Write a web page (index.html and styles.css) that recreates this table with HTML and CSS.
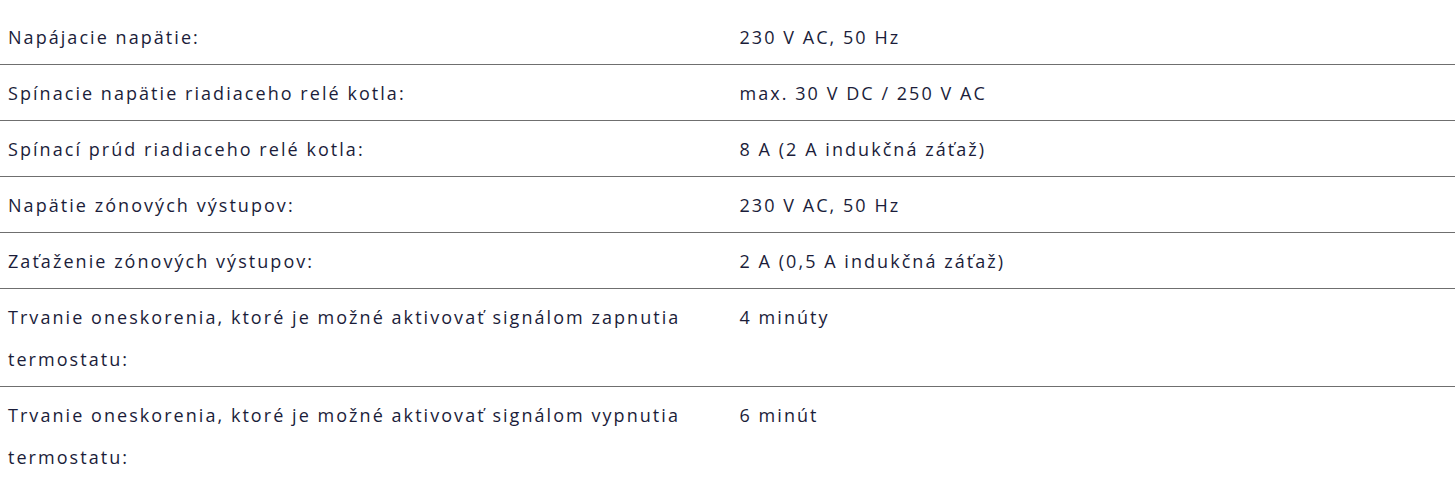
FILE: index.html
```html
<!DOCTYPE html>
<html lang="sk">
<head>
<meta charset="utf-8">
<title>Technické parametre</title>
<link rel="stylesheet" href="styles.css">
</head>
<body>
<table class="spec">
  <tbody>
    <tr><td class="label">Napájacie napätie:</td><td class="value">230 V AC, 50 Hz</td></tr>
    <tr><td class="label">Spínacie napätie riadiaceho relé kotla:</td><td class="value">max. 30 V DC / 250 V AC</td></tr>
    <tr><td class="label">Spínací prúd riadiaceho relé kotla:</td><td class="value">8 A (2 A indukčná záťaž)</td></tr>
    <tr><td class="label">Napätie zónových výstupov:</td><td class="value">230 V AC, 50 Hz</td></tr>
    <tr><td class="label">Zaťaženie zónových výstupov:</td><td class="value">2 A (0,5 A indukčná záťaž)</td></tr>
    <tr><td class="label">Trvanie oneskorenia, ktoré je možné aktivovať signálom zapnutia termostatu:</td><td class="value">4 minúty</td></tr>
    <tr><td class="label">Trvanie oneskorenia, ktoré je možné aktivovať signálom vypnutia termostatu:</td><td class="value">6 minút</td></tr>
  </tbody>
</table>
</body>
</html>
```
FILE: styles.css
```css
html, body {
  background: #ffffff;
}
body {
  margin: 9px 0 0 0;
  font-family: "Open Sans", "Noto Sans", sans-serif;
  font-size: 18px;
  color: #1b1d3a;
}
.spec {
  width: 100%;
  border-collapse: collapse;
  table-layout: fixed;
}
.spec td {
  vertical-align: top;
  line-height: 42px;
  padding: 7px 0 6px 0;
  border-bottom: 1px solid #6f6f6f;
  letter-spacing: 2.05px;
}
.spec tr:last-child td {
  border-bottom: none;
}
.spec .label {
  padding-left: 8px;
  padding-right: 20px;
}
.spec .value {
  padding-left: 12px;
}
```
